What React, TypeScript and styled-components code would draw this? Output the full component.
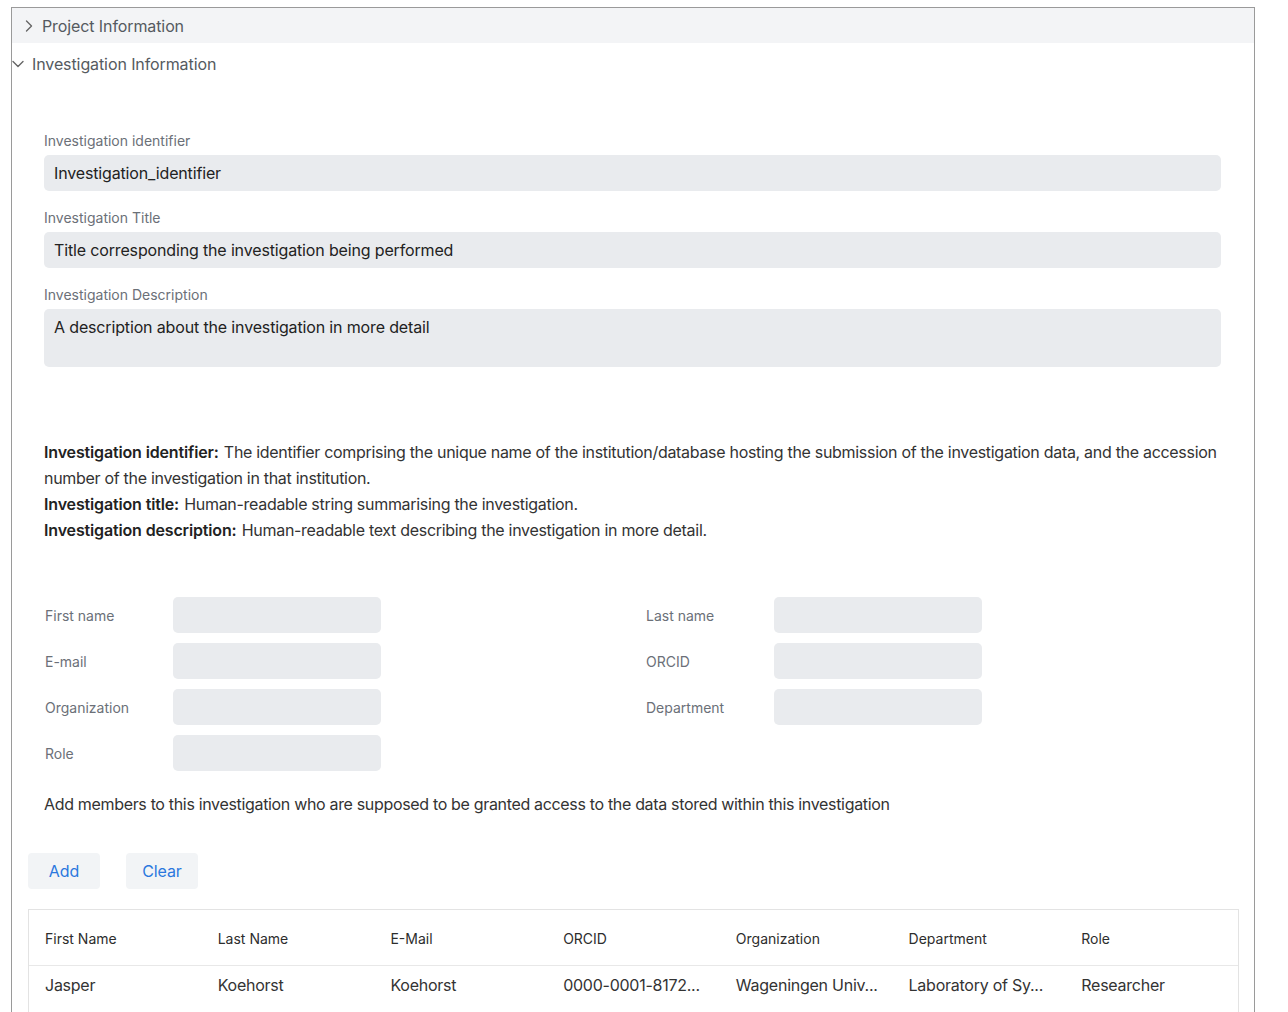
import React from "react";
import styled, { createGlobalStyle } from "styled-components";

const Global = createGlobalStyle`
  html, body { margin: 0; padding: 0; background: #fff; }
  body {
    font-family: Inter, "Noto Sans", "Liberation Sans", sans-serif;
    color: #333;
    -webkit-font-smoothing: antialiased;
  }
  * { box-sizing: border-box; }
`;

const Page = styled.div`
  padding: 7px 33px 0 11px;
  height: 1012px;
  overflow: hidden;
`;

const Frame = styled.div`
  border: 1px solid #9a9a9a;
  border-bottom: none;
  min-height: 1010px;
`;

const SectionHeader = styled.div<{ $open?: boolean }>`
  display: flex;
  align-items: center;
  height: ${(p) => (p.$open ? "40px" : "35px")};
  padding-left: ${(p) => (p.$open ? "0" : "13px")};
  gap: ${(p) => (p.$open ? "8px" : "9px")};
  background: ${(p) => (p.$open ? "#fff" : "#f3f4f6")};
  color: #555a60;
  font-size: 16px;
  letter-spacing: -0.1px;
  padding-top: ${(p) => (p.$open ? "1px" : "0")};
`;

const Body = styled.div`
  padding: 48px 15px 0 16px;
`;

const Fields = styled.div`
  padding: 0 18px 0 16px;
  display: flex;
  flex-direction: column;
  gap: 17px;
`;

const Field = styled.div`
  display: flex;
  flex-direction: column;
  gap: 4px;
`;

const Label = styled.label`
  font-size: 14px;
  line-height: 20px;
  color: #6b7078;
`;

const TextBox = styled.div<{ $tall?: boolean }>`
  background: #e9ebee;
  border-radius: 5px;
  height: ${(p) => (p.$tall ? "58px" : "36px")};
  padding: ${(p) => (p.$tall ? "8px 10px" : "0 10px")};
  display: flex;
  align-items: ${(p) => (p.$tall ? "flex-start" : "center")};
  font-size: 16px;
  letter-spacing: -0.15px;
  color: #222;
`;

const Help = styled.div`
  margin-top: 72px;
  padding: 0 18px 0 16px;
  font-size: 16px;
  line-height: 26px;
  letter-spacing: -0.3px;
  color: #333;
`;

const Term = styled.b`
  font-weight: 600;
  color: #222;
  letter-spacing: -0.15px;
  margin-right: 1px;
`;

const MemberGrid = styled.div`
  margin-top: 54px;
  padding: 0 0 0 17px;
  display: grid;
  grid-template-columns: 601px 1fr;
  row-gap: 10px;
`;

const MemberRow = styled.div`
  display: flex;
  align-items: center;
`;

const MemberLabel = styled.span`
  width: 128px;
  font-size: 14px;
  color: #6b7078;
`;

const SmallInput = styled.div`
  width: 208px;
  height: 36px;
  background: #e9ebee;
  border-radius: 5px;
`;

const Note = styled.p`
  margin: 20px 0 0 16px;
  font-size: 16px;
  line-height: 26px;
  letter-spacing: -0.33px;
  color: #333;
`;

const Buttons = styled.div`
  display: flex;
  gap: 26px;
  margin-top: 36px;
`;

const Button = styled.button`
  width: 72px;
  height: 36px;
  border: none;
  border-radius: 4px;
  background: #f2f4f6;
  color: #2b78de;
  font-family: inherit;
  font-size: 16px;
  letter-spacing: -0.1px;
  padding: 0;
`;

const Table = styled.div`
  margin-top: 20px;
  border: 1px solid #e3e3e3;
  border-bottom: none;
`;

const TRow = styled.div<{ $head?: boolean }>`
  display: grid;
  grid-template-columns: repeat(7, 1fr);
  height: ${(p) => (p.$head ? "56px" : "48px")};
  align-items: center;
  border-bottom: ${(p) => (p.$head ? "1px solid #e8e8e8" : "none")};
  font-size: ${(p) => (p.$head ? "14px" : "16px")};
  letter-spacing: ${(p) => (p.$head ? "0" : "-0.25px")};
  color: ${(p) => (p.$head ? "#2d2d2d" : "#333")};
  padding: ${(p) => (p.$head ? "1px 0 0" : "0 0 10px")};
`;

const Cell = styled.div`
  padding: 0 12px 0 16px;
  white-space: nowrap;
  overflow: hidden;
`;

const Chevron = ({ dir }: { dir: "right" | "down" }) =>
  dir === "right" ? (
    <svg width="8" height="12" viewBox="0 0 8 12" fill="none">
      <polyline points="1.5,1 6.5,6 1.5,11" stroke="#666" strokeWidth="1.4" strokeLinecap="round" strokeLinejoin="round" />
    </svg>
  ) : (
    <svg width="12" height="8" viewBox="0 0 12 8" fill="none">
      <polyline points="1,1.5 6,6.5 11,1.5" stroke="#666" strokeWidth="1.4" strokeLinecap="round" strokeLinejoin="round" />
    </svg>
  );

const leftLabels = ["First name", "E-mail", "Organization", "Role"];
const rightLabels = ["Last name", "ORCID", "Department"];

const heads = ["First Name", "Last Name", "E-Mail", "ORCID", "Organization", "Department", "Role"];
const row = ["Jasper", "Koehorst", "Koehorst", "0000-0001-8172...", "Wageningen Univ...", "Laboratory of Sy...", "Researcher"];

export default function App() {
  return (
    <>
      <Global />
      <Page>
        <Frame>
          <SectionHeader>
            <Chevron dir="right" />
            <span>Project Information</span>
          </SectionHeader>
          <SectionHeader $open>
            <Chevron dir="down" />
            <span>Investigation Information</span>
          </SectionHeader>
          <Body>
            <Fields>
              <Field>
                <Label>Investigation identifier</Label>
                <TextBox>Investigation_identifier</TextBox>
              </Field>
              <Field>
                <Label>Investigation Title</Label>
                <TextBox>Title corresponding the investigation being performed</TextBox>
              </Field>
              <Field>
                <Label>Investigation Description</Label>
                <TextBox $tall>A description about the investigation in more detail</TextBox>
              </Field>
            </Fields>
            <Help>
              <Term>Investigation identifier:</Term> The identifier comprising the unique name of the
              institution/database hosting the submission of the investigation data, and the accession
              number of the investigation in that institution.
              <br />
              <Term>Investigation title:</Term> Human-readable string summarising the investigation.
              <br />
              <Term>Investigation description:</Term> Human-readable text describing the investigation in
              more detail.
            </Help>
            <MemberGrid>
              {leftLabels.map((l, i) => (
                <React.Fragment key={l}>
                  <MemberRow>
                    <MemberLabel>{l}</MemberLabel>
                    <SmallInput />
                  </MemberRow>
                  {rightLabels[i] ? (
                    <MemberRow>
                      <MemberLabel>{rightLabels[i]}</MemberLabel>
                      <SmallInput />
                    </MemberRow>
                  ) : (
                    <div />
                  )}
                </React.Fragment>
              ))}
            </MemberGrid>
            <Note>
              Add members to this investigation who are supposed to be granted access to the data stored
              within this investigation
            </Note>
            <Buttons>
              <Button>Add</Button>
              <Button>Clear</Button>
            </Buttons>
            <Table>
              <TRow $head>
                {heads.map((h) => (
                  <Cell key={h}>{h}</Cell>
                ))}
              </TRow>
              <TRow>
                {row.map((c, i) => (
                  <Cell key={i}>{c}</Cell>
                ))}
              </TRow>
            </Table>
          </Body>
        </Frame>
      </Page>
    </>
  );
}
